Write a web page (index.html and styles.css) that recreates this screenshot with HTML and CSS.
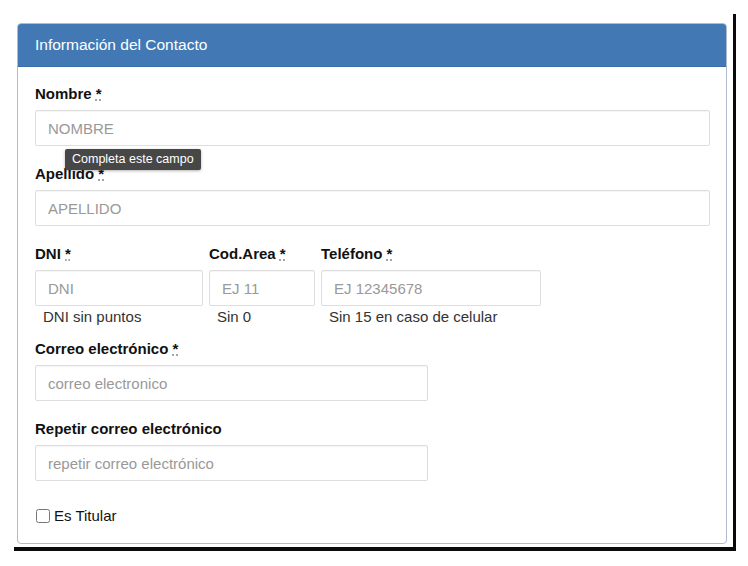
FILE: index.html
```html
<!DOCTYPE html>
<html lang="es">
<head>
    <meta charset="UTF-8">
    <meta name="viewport" content="width=device-width, initial-scale=1.0">
    <title>Información del Contacto</title>
    <link rel="stylesheet" href="styles.css">
</head>
<body>

    <div class="frame">
        <div class="panel">
            <div class="panel-heading">Información del Contacto</div>
            <div class="panel-body">
                <div class="form-group tip-anchor">
                    <label>Nombre <abbr title="requerido">*</abbr></label>
                    <input type="text" class="full" placeholder="NOMBRE">
                    <div class="tooltip">Completa este campo</div>
                </div>
                <div class="form-group">
                    <label>Apellido <abbr title="requerido">*</abbr></label>
                    <input type="text" class="full" placeholder="APELLIDO">
                </div>
                <div class="row">
                    <div class="col col-dni">
                        <label>DNI <abbr title="requerido">*</abbr></label>
                        <input type="text" placeholder="DNI">
                        <span class="help">DNI sin puntos</span>
                    </div>
                    <div class="col col-area">
                        <label>Cod.Area <abbr title="requerido">*</abbr></label>
                        <input type="text" placeholder="EJ 11">
                        <span class="help">Sin 0</span>
                    </div>
                    <div class="col col-tel">
                        <label>Teléfono <abbr title="requerido">*</abbr></label>
                        <input type="text" placeholder="EJ 12345678">
                        <span class="help">Sin 15 en caso de celular</span>
                    </div>
                </div>
                <div class="form-group">
                    <label>Correo electrónico <abbr title="requerido">*</abbr></label>
                    <input type="text" class="half" placeholder="correo electronico">
                </div>
                <div class="form-group">
                    <label>Repetir correo electrónico</label>
                    <input type="text" class="half" placeholder="repetir correo electrónico">
                </div>
                <label class="check"><input type="checkbox"> Es Titular</label>
            </div>
        </div>
    </div>

</body>
</html>
```

FILE: styles.css
```css
body {
    font-family: "Liberation Sans", Arial, sans-serif;
    font-size: 15px;
    color: #222;
    background-color: #ffffff;
    margin: 0;
}
.frame {
    margin: 14px 0 0 14px;
    width: 713px;
    height: 524px;
    padding: 9px 3px 0 3px;
    border-right: 3px solid #0a0a0a;
    border-bottom: 4px solid #0a0a0a;
}
.panel {
    width: 710px;
    height: 521px;
    box-sizing: border-box;
    border: 1px solid #aebbd0;
    border-radius: 4px;
    overflow: hidden;
}
.panel-heading {
    background-color: #4279b5;
    color: #ffffff;
    height: 42px;
    line-height: 42px;
    padding-left: 17px;
    border-bottom: 1px solid #3a6ea8;
    font-size: 15.5px;
}
.panel-body {
    padding: 17px 16px 0 17px;
}
label {
    display: block;
    font-weight: bold;
    color: #111;
    line-height: 20px;
    margin-bottom: 6px;
}
abbr {
    text-decoration: underline dotted;
    text-decoration-color: #888;
    cursor: help;
}
input[type="text"] {
    display: block;
    box-sizing: border-box;
    height: 36px;
    padding: 0 12px;
    font-family: inherit;
    font-size: 15px;
    color: #333;
    border: 1px solid #dddddd;
    border-radius: 2px;
    box-shadow: inset 0 1px 1px rgba(0, 0, 0, 0.04);
    background-color: #ffffff;
}
input::placeholder {
    color: #999999;
}
.full {
    width: 675px;
}
.half {
    width: 393px;
}
.form-group {
    margin-bottom: 18px;
}
.tip-anchor {
    position: relative;
}
.tooltip {
    position: absolute;
    left: 30px;
    top: 65px;
    background-color: #474747;
    color: #ffffff;
    font-size: 12.5px;
    line-height: 21px;
    padding: 0 7px;
    border-radius: 2px;
    box-shadow: 0 1px 3px rgba(0, 0, 0, 0.3);
}
.row {
    display: flex;
    gap: 6px;
    margin-bottom: 12px;
}
.col-dni input {
    width: 168px;
}
.col-area input {
    width: 106px;
}
.col-tel input {
    width: 220px;
}
.help {
    display: block;
    color: #333;
    line-height: 20px;
    margin-top: 1px;
    padding-left: 8px;
}
.check {
    display: flex;
    align-items: center;
    font-weight: normal;
    margin-top: 25px;
}
.check input {
    margin: 0 4px 0 1px;
    width: 14px;
    height: 14px;
}
```
